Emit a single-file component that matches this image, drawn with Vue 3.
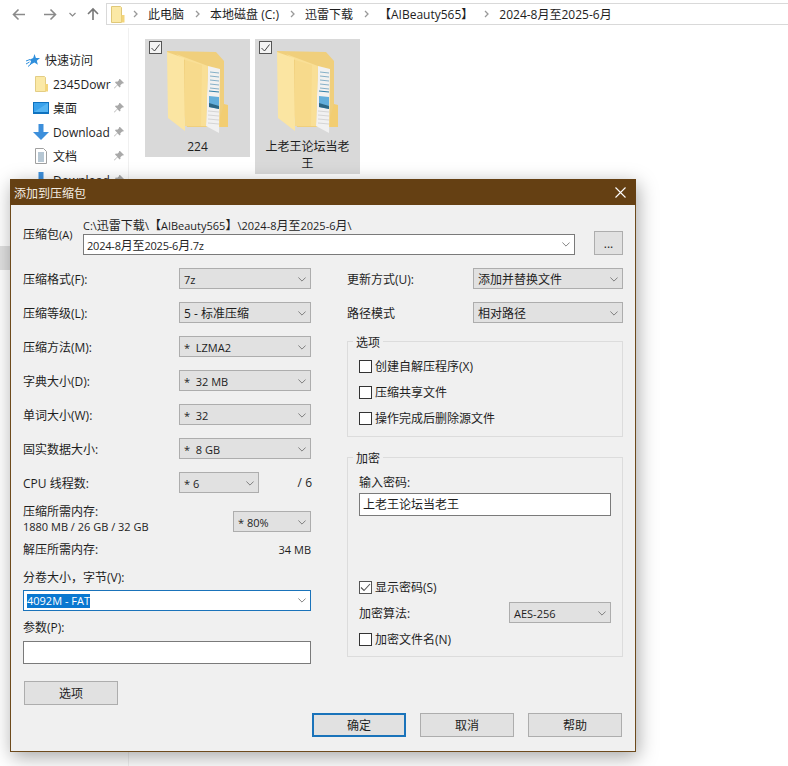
<script setup>
const crumbs = ['此电脑', '本地磁盘 (C:)', '迅雷下载', '【AIBeauty565】', '2024-8月至2025-6月']

const folders = [
  { name: '224', tall: false },
  { name: '上老王论坛当老王', tall: true }
]

const quickLinks = [
  { name: '2345Dowr', icon: 'folder' },
  { name: '桌面', icon: 'desktop' },
  { name: 'Download', icon: 'download' },
  { name: '文档', icon: 'doc' },
  { name: 'Download', icon: 'download' }
]

const formatRows = [
  { label: '压缩格式(F):', value: '7z', latin: true },
  { label: '压缩等级(L):', value: '5 - 标准压缩', latin: false },
  { label: '压缩方法(M):', value: '*  LZMA2', latin: true },
  { label: '字典大小(D):', value: '*  32 MB', latin: true },
  { label: '单词大小(W):', value: '*  32', latin: true },
  { label: '固实数据大小:', value: '*  8 GB', latin: true }
]

const optionChecks = ['创建自解压程序(X)', '压缩共享文件', '操作完成后删除源文件']
</script>

<template>
  <div class="explorer">
    <!-- Address bar -->
    <div class="toolbar">
      <svg class="nav-icons" width="106" height="28" viewBox="0 0 106 28" fill="none" stroke="#8a8a8a" stroke-width="1.6">
        <path d="M25 14.500H14M18.500 9.500l-5 5 5 5" />
        <path d="M44 14.500h11M50.500 9.500l5 5-5 5" />
        <path d="M69.500 13l3 3 3-3" stroke-width="1.2" />
        <path d="M93 20V9M88 14l5-5 5 5" stroke="#777" />
      </svg>
      <div class="address">
        <svg width="14" height="17" viewBox="0 0 14 17" class="address-folder">
          <path d="M0.500 0.500h9l1 1v15h-10z" fill="#fbe9a6" stroke="#e0c878" />
          <path d="M10.500 9h3v7.500h-3z" fill="#f3d57b" />
        </svg>
        <template v-for="(crumb, i) in crumbs" :key="i">
          <svg width="5" height="8" viewBox="0 0 5 8" class="crumb-arrow"><path d="M1 1l3 3-3 3" fill="none" stroke="#999" stroke-width="1.300" /></svg>
          <span class="crumb">{{ crumb }}</span>
        </template>
      </div>
    </div>

    <div class="content">
      <!-- Navigation pane -->
      <aside class="sidebar">
        <div class="quick-head">
          <svg width="14" height="13" viewBox="0 0 14 13">
            <path d="M8.500 0l1.400 3.900 4.100.2-3.200 2.600 1.100 4.100-3.500-2.300L3.800 11l1.300-3.900L3.400 5.800l3.800-1.700z" fill="#2f8fdc" />
            <path d="M0 7l4-1.500M0 10l3.500-2M2 12.500L5 10" stroke="#2f8fdc" stroke-width="1" />
          </svg>
          <span>快速访问</span>
        </div>
        <div v-for="(link, i) in quickLinks" :key="i" class="quick-row">
          <span class="quick-icon">
            <svg v-if="link.icon === 'folder'" width="13" height="16" viewBox="0 0 13 16">
              <path d="M0.500 0.500h9l1 1v14h-10z" fill="#fbe9a6" stroke="#e3cd85" />
              <path d="M10 8h3v7.500h-3z" fill="#f3d57b" />
            </svg>
            <svg v-else-if="link.icon === 'desktop'" width="16" height="12" viewBox="0 0 16 12">
              <rect width="16" height="12" fill="#0f72bf" />
              <path d="M1 1h14v9H1z" fill="#3aa2ec" />
              <path d="M1 10L15 1v9z" fill="#55b4f2" />
            </svg>
            <svg v-else-if="link.icon === 'download'" width="16" height="16" viewBox="0 0 16 16">
              <path d="M5.500 0h5v8H16l-8 8-8-8h5.500z" fill="#3d8fdb" />
            </svg>
            <svg v-else width="12" height="16" viewBox="0 0 12 16" fill="none">
              <path d="M0.500 0.500h8l3 3v12h-11z" fill="#fff" stroke="#a0a0a0" />
              <path d="M3 5h6M3 7h6M3 9h6M3 11h6M3 13h6" stroke="#6f8fa8" />
            </svg>
          </span>
          <span class="quick-name">{{ link.name }}</span>
          <svg class="pin" width="10" height="10" viewBox="0 0 10 10">
            <path d="M6 0l4 4-1 .6-.8-.2L6.300 6.300l.2 1.500-.8.800-2.300-2.300L0.500 9.500 0 9l3.300-3.300L1 3.400l.8-.8 1.500.2 1.900-1.900-.2-.8z" fill="#a9a9a9" />
          </svg>
        </div>
        <div class="sidebar-selected"></div>
      </aside>

      <!-- Selected folders -->
      <main class="files">
        <div v-for="folder in folders" :key="folder.name" class="tile" :class="{ tall: folder.tall }">
          <span class="tile-check">
            <svg width="9" height="8" viewBox="0 0 9 8"><path d="M0.500 4l3 3 5-6.500" fill="none" stroke="#444" stroke-width="1" /></svg>
          </span>
          <svg class="tile-folder" width="62" height="82" viewBox="0 0 62 82">
            <path d="M0 0l49 1 8 9v66H20z" fill="#f0cf7c" />
            <path d="M57 53l4 1v22H50z" fill="#f2cd72" />
            <path d="M41 15l12 3-1 64-13-7z" fill="#f1f1f1" />
            <path d="M43 21l9 1M43 25l9 1M43 29l9 1M43 33l9 1M43 37l9 1" stroke="#86b0c8" stroke-width="1" />
            <path d="M42 40l10 1" stroke="#2f7fa8" stroke-width="1.200" />
            <path d="M42 45l10 1v12l-10-2z" fill="#62aedb" />
            <path d="M42 52l10 3v3l-10-2z" fill="#2d6784" />
            <path d="M41 60l11 1M41 64l11 1M41 68l11 1M41 72l11 1" stroke="#d5d5d5" stroke-width="1" />
            <path d="M9 3l32 12-2 60H18V9z" fill="#f9df96" />
            <path d="M18 9l17 5-1 61H18z" fill="#f7da8c" />
            <path d="M0 1l17 6 1 73-17-13z" fill="#fbe5a2" />
          </svg>
          <span class="tile-name">{{ folder.name }}</span>
        </div>
      </main>
    </div>

    <!-- 7-Zip dialog -->
    <section class="dialog">
      <header class="dialog-title">
        <span>添加到压缩包</span>
        <svg width="11" height="11" viewBox="0 0 11 11"><path d="M0.500 0.500l10 10M10.500 0.500l-10 10" stroke="#fff" stroke-width="1.100" /></svg>
      </header>

      <div class="dialog-body">
        <div class="archive-row">
          <span class="archive-label">压缩包<span class="latin">(A)</span></span>
          <div class="archive-path">
            <div class="path-text"><span class="latin">C:\</span>迅雷下载<span class="latin">\</span>【<span class="latin">AIBeauty565</span>】<span class="latin">\2024-8</span>月至<span class="latin">2025-6</span>月<span class="latin">\</span></div>
            <div class="archive-input">
              <span class="archive-name"><span class="latin">2024-8</span>月至<span class="latin">2025-6</span>月<span class="latin">.7z</span></span>
              <svg class="chevron" viewBox="0 0 10 6"><path d="M0.500 0.500L5 5l4.500-4.500" fill="none" stroke="#666" /></svg>
            </div>
          </div>
          <button class="btn browse">...</button>
        </div>

        <div class="columns">
          <div class="col-left">
            <div v-for="row in formatRows" :key="row.label" class="form-row">
              <span>{{ row.label }}</span>
              <div class="select" :class="{ latin: row.latin }">
                <span>{{ row.value }}</span>
                <svg class="chevron" viewBox="0 0 10 6"><path d="M0.500 0.500L5 5l4.500-4.500" fill="none" stroke="#666" /></svg>
              </div>
            </div>
            <div class="form-row">
              <span class="cpu-label">CPU 线程数:</span>
              <div class="select select-cpu latin">
                <span>*  6</span>
                <svg class="chevron" viewBox="0 0 10 6"><path d="M0.500 0.500L5 5l4.500-4.500" fill="none" stroke="#666" /></svg>
              </div>
              <span class="thread-total">/ 6</span>
            </div>

            <div class="memory-row">
              <div class="memory-text">
                <div>压缩所需内存:</div>
                <div class="latin">1880 MB / 26 GB / 32 GB</div>
              </div>
              <div class="select select-mem latin">
                <span>*  80%</span>
                <svg class="chevron" viewBox="0 0 10 6"><path d="M0.500 0.500L5 5l4.500-4.500" fill="none" stroke="#666" /></svg>
              </div>
            </div>
            <div class="decompress-row">
              <span>解压所需内存:</span>
              <span class="latin">34 MB</span>
            </div>

            <div class="field-label volume-label">分卷大小，字节(V):</div>
            <div class="combo-focus">
              <span class="selected-text latin">4092M - FAT</span>
              <svg class="chevron" viewBox="0 0 10 6"><path d="M0.500 0.500L5 5l4.500-4.500" fill="none" stroke="#666" /></svg>
            </div>
            <div class="field-label params-label">参数(P):</div>
            <div class="text-input params-input"></div>
            <button class="btn options-btn">选项</button>
          </div>

          <div class="col-right">
            <div class="form-row">
              <span>更新方式(U):</span>
              <div class="select select-wide">
                <span>添加并替换文件</span>
                <svg class="chevron" viewBox="0 0 10 6"><path d="M0.500 0.500L5 5l4.500-4.500" fill="none" stroke="#666" /></svg>
              </div>
            </div>
            <div class="form-row">
              <span>路径模式</span>
              <div class="select select-wide">
                <span>相对路径</span>
                <svg class="chevron" viewBox="0 0 10 6"><path d="M0.500 0.500L5 5l4.500-4.500" fill="none" stroke="#666" /></svg>
              </div>
            </div>

            <fieldset class="group group-options">
              <legend>选项</legend>
              <label v-for="item in optionChecks" :key="item" class="check-row">
                <span class="checkbox"></span>
                <span>{{ item }}</span>
              </label>
            </fieldset>

            <fieldset class="group group-encrypt">
              <legend>加密</legend>
              <div class="field-label password-label">输入密码:</div>
              <div class="text-input password-input">上老王论坛当老王</div>
              <label class="check-row show-password">
                <span class="checkbox">
                  <svg width="11" height="9" viewBox="0 0 11 9"><path d="M1 4.500l3 3L10 1" fill="none" stroke="#555" stroke-width="1.100" /></svg>
                </span>
                <span>显示密码(S)</span>
              </label>
              <div class="form-row method-row">
                <span>加密算法:</span>
                <div class="select select-method latin">
                  <span>AES-256</span>
                  <svg class="chevron" viewBox="0 0 10 6"><path d="M0.500 0.500L5 5l4.500-4.500" fill="none" stroke="#666" /></svg>
                </div>
              </div>
              <label class="check-row encrypt-names">
                <span class="checkbox"></span>
                <span>加密文件名(N)</span>
              </label>
            </fieldset>
          </div>
        </div>

        <footer class="dialog-actions">
          <button class="btn btn-primary">确定</button>
          <button class="btn">取消</button>
          <button class="btn">帮助</button>
        </footer>
      </div>
    </section>
  </div>
</template>

<style>
html,
body {
  margin: 0;
  background: #fff;
  overflow: hidden;
}
</style>

<style scoped>
.explorer {
  position: relative;
  width: 788px;
  height: 766px;
  overflow: hidden;
  background: #fff;
  color: #1e1e1e;
  font-family: "Open Sans", "Noto Sans CJK SC", sans-serif;
  font-size: 12px;
}

.latin {
  font-size: 11px;
}

.toolbar {
  display: flex;
  height: 28px;
}

.nav-icons {
  flex: none;
}

.address {
  flex: 1;
  height: 20px;
  margin-top: 3px;
  margin-right: -2px;
  padding-left: 4px;
  border: 1px solid #d9d9d9;
  display: flex;
  align-items: center;
  gap: 10px;
  white-space: nowrap;
}

.address-folder {
  margin-right: -2px;
}

.crumb {
  padding-right: 1px;
}

.crumb-arrow {
  flex: none;
}

.content {
  display: flex;
}

.sidebar {
  width: 129px;
  height: 738px;
  flex: none;
  box-sizing: border-box;
  padding-top: 23px;
  border-right: 1px solid #f0f0f0;
}

.quick-head {
  height: 18px;
  padding-left: 26px;
  display: flex;
  align-items: center;
  gap: 5px;
}

.quick-row {
  height: 24px;
  margin-left: 32px;
  display: flex;
  align-items: center;
}

.quick-head + .quick-row {
  margin-top: 3px;
}

.quick-icon {
  width: 21px;
  flex: none;
  display: flex;
  justify-content: center;
  padding-right: 3px;
  box-sizing: border-box;
}

.quick-name {
  width: 58px;
  overflow: hidden;
  white-space: nowrap;
  flex: none;
}

.pin {
  margin-left: 3px;
  flex: none;
}

.sidebar-selected {
  height: 24px;
  margin-top: 54px;
  background: #e0e0e0;
}

.files {
  display: flex;
  align-items: flex-start;
  gap: 5px;
  padding: 11px 0 0 16px;
}

.tile {
  position: relative;
  width: 105px;
  height: 118px;
  background: #d9d9d9;
  display: flex;
  flex-direction: column;
  align-items: center;
}

.tile.tall {
  height: 135px;
}

.tile-check {
  position: absolute;
  left: 4px;
  top: 2px;
  width: 11px;
  height: 11px;
  border: 1px solid #555;
  background: #f4f4f4;
  display: flex;
  align-items: center;
  justify-content: center;
}

.tile-folder {
  margin-top: 12px;
  flex: none;
}

.tile-name {
  width: 88px;
  margin-top: 5px;
  line-height: 17px;
  text-align: center;
}

.dialog {
  position: absolute;
  left: 10px;
  top: 179px;
  width: 626px;
  height: 573px;
  box-sizing: border-box;
  border: 1px solid #6d4a1c;
  background: #f0f0f0;
  box-shadow: 2px 5px 18px rgba(0, 0, 0, 0.35);
}

.dialog-title {
  height: 25px;
  margin: -1px -1px 0;
  padding: 1px 10px 0 4px;
  background: #654013;
  color: #f4eee4;
  display: flex;
  align-items: center;
  justify-content: space-between;
}

.dialog-body {
  padding: 0 12px;
}

.archive-row {
  display: flex;
  height: 51px;
  padding-top: 13px;
  box-sizing: border-box;
}

.archive-label {
  width: 60px;
  flex: none;
  margin-top: 7px;
}

.archive-path {
  width: 492px;
  flex: none;
}

.path-text {
  height: 16px;
  line-height: 15px;
  white-space: nowrap;
}

.archive-input {
  height: 21px;
  box-sizing: border-box;
  border: 1px solid #7a7a7a;
  background: #fff;
  padding: 0 4px 0 3px;
  display: flex;
  align-items: center;
  justify-content: space-between;
}

.archive-name {
  letter-spacing: -0.2px;
}

.browse {
  width: 29px;
  height: 24px;
  margin-left: 19px;
  margin-top: 13px;
}

.btn {
  width: 94px;
  height: 24px;
  padding: 0;
  border: 1px solid #adadad;
  background: #e1e1e1;
  color: #1e1e1e;
  font: inherit;
}

.btn-primary {
  border: 2px solid #1a73ba;
}

.columns {
  display: flex;
  gap: 36px;
  margin-top: 12px;
}

.col-left {
  width: 288px;
  flex: none;
  display: flex;
  flex-direction: column;
}

.col-right {
  width: 276px;
  flex: none;
}

.form-row {
  display: flex;
  align-items: center;
  justify-content: space-between;
  height: 21px;
  margin-bottom: 13px;
}

.select {
  width: 132px;
  height: 21px;
  box-sizing: border-box;
  border: 1px solid #adadad;
  background: #e1e1e1;
  padding: 1px 4px 0;
  display: flex;
  align-items: center;
  justify-content: space-between;
  white-space: pre;
  flex: none;
}

.chevron {
  width: 8px;
  height: 5px;
  flex: none;
  margin-right: 0;
}

.cpu-label {
  width: 156px;
  flex: none;
}

.select-cpu {
  width: 80px;
}

.thread-total {
  margin-left: auto;
  margin-right: -1px;
}

.memory-row {
  display: flex;
  justify-content: space-between;
  margin-top: -2px;
  height: 30px;
}

.memory-text {
  line-height: 15px;
}

.select-mem {
  width: 78px;
  margin-top: 7px;
}

.decompress-row {
  display: flex;
  justify-content: space-between;
  height: 16px;
  line-height: 16px;
  margin-top: 8px;
}

.field-label {
  height: 16px;
  line-height: 16px;
}

.volume-label {
  margin-top: 12px;
}

.combo-focus {
  height: 21px;
  margin-top: 4px;
  box-sizing: border-box;
  border: 1px solid #1a73ba;
  background: #fff;
  padding: 0 4px 0 3px;
  display: flex;
  align-items: center;
  justify-content: space-between;
}

.selected-text {
  background: #0a78d0;
  color: #fff;
  line-height: 14px;
}

.params-label {
  margin-top: 9px;
}

.text-input {
  box-sizing: border-box;
  border: 1px solid #7a7a7a;
  background: #fff;
}

.params-input {
  height: 23px;
  margin-top: 5px;
}

.options-btn {
  margin-top: 17px;
  margin-left: 1px;
}

.select-wide {
  width: 150px;
}

.group {
  margin: 0;
  padding: 0 11px;
  border: 1px solid #dcdcdc;
  min-inline-size: auto;
  box-sizing: border-box;
}

.group legend {
  height: 16px;
  line-height: 20px;
  padding: 0 3px;
  margin-left: -6px;
}

.group-options {
  height: 104px;
  margin-top: -3px;
  padding-top: 8px;
}

.check-row {
  display: flex;
  align-items: center;
  gap: 3px;
  height: 18px;
}

.group-options .check-row + .check-row {
  margin-top: 8px;
}

.checkbox {
  width: 13px;
  height: 13px;
  box-sizing: border-box;
  border: 1px solid #333;
  background: #fff;
  display: flex;
  align-items: center;
  justify-content: center;
  flex: none;
}

.group-encrypt {
  height: 208px;
  margin-top: 12px;
  padding-top: 8px;
}

.password-label {
  line-height: 19px;
}

.password-input {
  height: 23px;
  margin-top: 4px;
  line-height: 21px;
  padding-left: 3px;
}

.show-password {
  margin-top: 62px;
}

.show-password .checkbox {
  border-color: #555;
}

.method-row {
  margin: 6px 0 0;
}

.select-method {
  width: 102px;
}

.encrypt-names {
  margin-top: 7px;
}

.dialog-actions {
  display: flex;
  justify-content: flex-end;
  gap: 14px;
  margin-top: 8px;
  padding-right: 1px;
}
</style>
